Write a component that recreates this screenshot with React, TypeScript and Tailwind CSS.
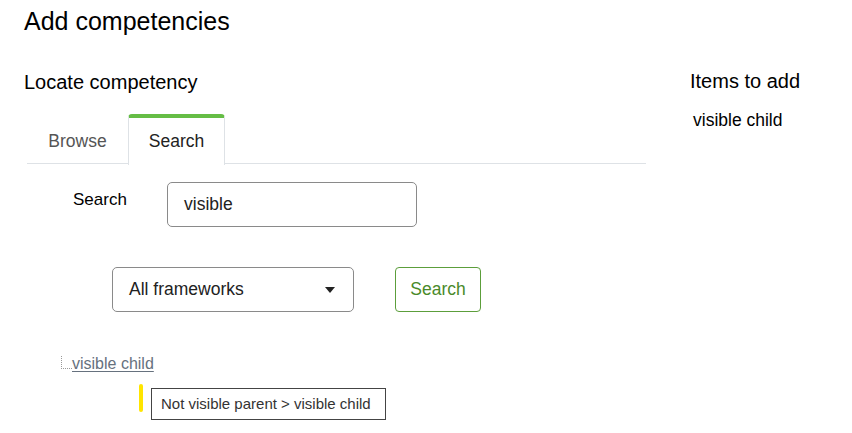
import React from "react";

export default function App() {
  return (
    <div className="w-[852px] h-[433px] bg-white text-black font-['Liberation_Sans',Arial,sans-serif] overflow-hidden">
      <h1 className="pl-6 pt-[6px] text-[25px] leading-[30px] font-normal">Add competencies</h1>
      <div className="flex">
        <div className="ml-6 w-[622px]">
          <h2 className="mt-[34px] text-[20px] leading-[24px]">Locate competency</h2>
          <div className="mt-[20px] ml-[3px] flex border-b border-[#dee2e6] h-[50px]">
            <div className="w-[101px] h-[50px] flex items-center justify-center pt-[4px] text-[17.5px] text-[#555]">Browse</div>
            <div className="w-[97px] h-[51px] bg-white border-t-4 border-t-[#65bd45] border-x border-x-[#dee2e6] rounded-t-[4px] flex items-center justify-center text-[17.5px] text-[#222]">Search</div>
          </div>
          <div className="mt-[18px] flex items-start">
            <span className="ml-[49px] mt-[8px] w-[94px] text-[17px] leading-[20px]">Search</span>
            <div className="w-[250px] h-[45px] border border-[#8a8a8a] rounded-[5px] flex items-center pl-[16px] text-[17.5px] text-[#222]">visible</div>
          </div>
          <div className="mt-[40px] ml-[88px] flex items-center gap-[41px]">
            <div className="w-[242px] h-[45px] border border-[#8a8a8a] rounded-[5px] flex items-center justify-between pl-[16px] pr-[18px] text-[17.5px] text-[#222]">
              <span>All frameworks</span>
              <svg width="10" height="6" viewBox="0 0 10 6"><path d="M0 0 L10 0 L5 6 Z" fill="#222" /></svg>
            </div>
            <div className="w-[86px] h-[45px] border border-[#5c9e3b] rounded-[4px] flex items-center justify-center text-[17.5px] text-[#4a8a2a]">Search</div>
          </div>
          <div className="mt-[42px] ml-[37px] flex items-end">
            <div className="w-[11px] h-[13px] mb-[5px] border-l border-b border-dotted border-[#999]" />
            <a className="text-[16px] leading-[20px] text-[#66717e] underline underline-offset-2 cursor-pointer">visible child</a>
          </div>
          <div className="mt-[10px] ml-[115px] flex items-start">
            <div className="w-[4px] h-[28px] bg-[#ffe500] rounded-[2px]" />
            <div className="ml-[8px] mt-[4px] w-[235px] h-[32px] border border-[#444] flex items-center pl-[9px] text-[15px] text-[#333]">
              Not visible parent &gt; visible child
            </div>
          </div>
        </div>
        <div className="ml-[44px]">
          <h2 className="mt-[33px] text-[20px] leading-[24px]">Items to add</h2>
          <div className="mt-[16px] ml-[3px] text-[17.5px] leading-[22px]">visible child</div>
        </div>
      </div>
    </div>
  );
}
